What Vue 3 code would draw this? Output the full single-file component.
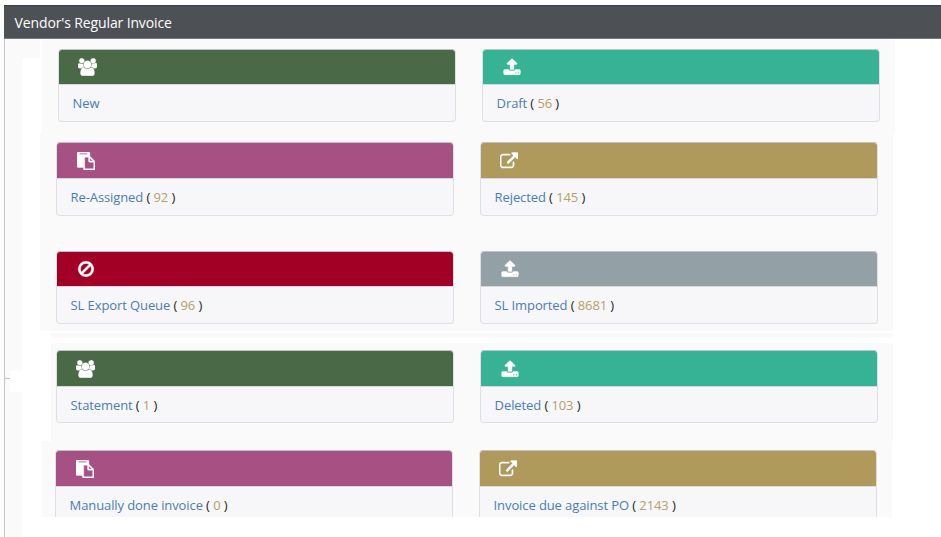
<script setup>
const icons = {
  users: {
    box: '-64 0 1920 1792',
    width: 19,
    d: 'M529 896q-162 5-265 128h-134q-82 0-138-40.5t-56-118.5q0-353 124-353 6 0 43.5 21t97.5 42.5 119 21.5q67 0 133-23-5 37-5 66 0 159 92 293zm1071 637q0 120-73 189.5t-194 69.5h-874q-121 0-194-69.5t-73-189.5q0-53 3.5-103.5t14-109 26.5-108.5 43-97.5 62-81 85.5-53.5 111.5-20q10 0 43 21.5t73 48 107 48 135 21.5 135-21.5 107-48 73-48 43-21.5q61 0 111.5 20t85.5 53.5 62 81 43 97.5 26.5 108.5 14 109 3.5 103.5zm-1024-1277q0 106-75 181t-181 75-181-75-75-181 75-181 181-75 181 75 75 181zm704 384q0 159-112.5 271.5t-271.5 112.5-271.5-112.5-112.5-271.5 112.5-271.5 271.5-112.5 271.5 112.5 112.5 271.5zm576 225q0 78-56 118.5t-138 40.5h-134q-103-123-265-128 92-134 92-293 0-29-5-66 66 23 133 23 59 0 119-21.5t97.5-42.5 43.5-21q124 0 124 353zm-128-609q0 106-75 181t-181 75-181-75-75-181 75-181 181-75 181 75 75 181z',
  },
  upload: {
    box: '0 0 1792 1792',
    width: 18,
    d: 'M1344 1472q0-26-19-45t-45-19-45 19-19 45 19 45 45 19 45-19 19-45zm256 0q0-26-19-45t-45-19-45 19-19 45 19 45 45 19 45-19 19-45zm128-224v320q0 40-28 68t-68 28h-1472q-40 0-68-28t-28-68v-320q0-40 28-68t68-28h427q21 56 70.5 92t110.5 36h256q61 0 110.5-36t70.5-92h427q40 0 68 28t28 68zm-325-648q-17 40-59 40h-256v448q0 26-19 45t-45 19h-256q-26 0-45-19t-19-45v-448h-256q-42 0-59-40-17-39 14-69l448-448q18-19 45-19t45 19l448 448q31 30 14 69z',
  },
  paste: {
    box: '0 0 1792 1792',
    width: 18,
    d: 'M768 1664h896v-640h-416q-40 0-68-28t-28-68v-416h-384v1152zm256-1440v-64q0-13-9.5-22.5t-22.5-9.5h-704q-13 0-22.5 9.5t-9.5 22.5v64q0 13 9.5 22.5t22.5 9.5h704q13 0 22.5-9.5t9.5-22.5zm256 672h299l-299-299v299zm512 128v672q0 40-28 68t-68 28h-960q-40 0-68-28t-28-68v-160h-544q-40 0-68-28t-28-68v-1344q0-40 28-68t68-28h1088q40 0 68 28t28 68v328q21 13 36 28l408 408q28 28 48 76t20 88z',
  },
  external: {
    box: '64 0 1792 1792',
    width: 18,
    d: 'M1472 989v320q0 119-84.5 203.5t-203.5 84.5h-832q-119 0-203.5-84.5t-84.5-203.5v-832q0-119 84.5-203.5t203.5-84.5h704q14 0 23 9t9 23v64q0 14-9 23t-23 9h-704q-66 0-113 47t-47 113v832q0 66 47 113t113 47h832q66 0 113-47t47-113v-320q0-14 9-23t23-9h64q14 0 23 9t9 23zm384-864v512q0 26-19 45t-45 19-45-19l-176-176-652 652q-10 10-23 10t-23-10l-114-114q-10-10-10-23t10-23l652-652-176-176q-19-19-19-45t19-45 45-19h512q26 0 45 19t19 45z',
  },
  ban: {
    box: '0 0 1792 1792',
    width: 18,
    d: 'M1440 893q0-161-87-295l-754 753q137 89 297 89 111 0 211.5-43.5t173.5-116.5 116-174.5 43-212.5zm-999 299l755-754q-135-91-300-91-148 0-273 73t-198 199-73 274q0 162 89 299zm1223-299q0 157-61 300t-163.5 246-245 164-298.5 61-298.5-61-245-164-163.5-246-61-300 61-299.5 163.5-245.5 245-164 298.5-61 298.5 61 245 164 163.5 245.5 61 299.5z',
  },
}

const rows = [
  { key: 'entry', cards: [
    { label: 'New', icon: 'users', tone: 'green' },
    { label: 'Draft', count: 56, icon: 'upload', tone: 'teal' },
  ] },
  { key: 'review', cards: [
    { label: 'Re-Assigned', count: 92, icon: 'paste', tone: 'purple' },
    { label: 'Rejected', count: 145, icon: 'external', tone: 'gold' },
  ] },
  { key: 'transfer', cards: [
    { label: 'SL Export Queue', count: 96, icon: 'ban', tone: 'red' },
    { label: 'SL Imported', count: 8681, icon: 'upload', tone: 'slate' },
  ] },
  { key: 'archive', cards: [
    { label: 'Statement', count: 1, icon: 'users', tone: 'green' },
    { label: 'Deleted', count: 103, icon: 'upload', tone: 'teal' },
  ] },
  { key: 'manual', cards: [
    { label: 'Manually done invoice', count: 0, icon: 'paste', tone: 'purple' },
    { label: 'Invoice due against PO', count: 2143, icon: 'external', tone: 'gold' },
  ] },
]
</script>

<template>
  <div class="page">
    <header class="bar">Vendor's Regular Invoice</header>
    <div class="content">
      <aside class="rail">
        <div class="rail-line"></div>
        <div class="rail-tick"></div>
        <div class="rail-line rail-rest"></div>
      </aside>
      <div class="gutter"></div>
      <main class="board">
        <section v-for="row in rows" :key="row.key" class="row" :class="row.key">
          <article v-for="card in row.cards" :key="card.label" class="card">
            <div class="head" :class="card.tone">
              <svg
                class="icon"
                :class="card.icon"
                :width="icons[card.icon].width"
                height="18"
                :viewBox="icons[card.icon].box"
              >
                <path :d="icons[card.icon].d" />
              </svg>
            </div>
            <div class="body">
              <a class="link">{{ card.label }}</a>
              <template v-if="card.count !== undefined"> ( <span class="count">{{ card.count }}</span> )</template>
            </div>
          </article>
        </section>
      </main>
    </div>
  </div>
</template>

<style>
body {
  background: #fff;
  overflow: hidden;
}
</style>

<style scoped>
.page {
  box-sizing: border-box;
  height: 537px;
  padding: 5px 0 0 4px;
  overflow: hidden;
  display: flex;
  flex-direction: column;
  font-family: 'Open Sans', 'Liberation Sans', sans-serif;
  font-size: 13px;
  letter-spacing: -0.1px;
  color: #222;
}
.bar {
  box-sizing: border-box;
  flex: none;
  height: 34px;
  padding-left: 10.6px;
  border-top: 1px solid #3d3f44;
  border-bottom: 1px solid #77797d;
  background: #4d5055;
  color: #fff;
  font-size: 14px;
  letter-spacing: -0.13px;
  line-height: 33px;
}
.content {
  flex: 1;
  display: flex;
  min-height: 0;
}
.rail {
  flex: none;
  width: 18px;
  display: flex;
  flex-direction: column;
}
.rail-line {
  box-sizing: border-box;
  height: 332px;
  border-left: 1px solid #c4c4c6;
  background: #fafafa;
}
.rail-tick {
  box-sizing: border-box;
  height: 21px;
  border-left: 1px solid #c4c4c6;
  background: linear-gradient(#c4c4c6, #c4c4c6) 0 7px / 5px 1px no-repeat,
    linear-gradient(#fafafa, #fafafa) 0 0 / 5px 21px no-repeat;
}
.rail-rest {
  height: auto;
  flex: 1;
}
.gutter {
  flex: none;
  width: 18px;
  height: 19px;
  background: #fafafa;
}
.board {
  flex: none;
  width: 860px;
  display: flex;
  flex-direction: column;
}
.row {
  box-sizing: border-box;
  flex: none;
  display: flex;
  gap: 26px;
  background: #fafafa;
}
.entry {
  width: 853px;
  height: 95px;
  margin-left: 2px;
  padding: 10px 0 0 16px;
}
.review {
  width: 853px;
  height: 100px;
  padding: 8px 0 0 16px;
}
.transfer {
  width: 853px;
  height: 97px;
  padding: 17px 0 0 16px;
  margin-bottom: 2px;
}
.archive {
  width: 842px;
  height: 108px;
  margin-left: 11px;
  padding: 17px 0 0 5px;
  background: linear-gradient(#fff, #fff) 0 5px / 100% 5px no-repeat, #fafafa;
}
.manual {
  width: 850px;
  height: 76px;
  margin-left: 2px;
  padding: 9px 0 0 13px;
  overflow: hidden;
}
.card {
  box-sizing: border-box;
  flex: none;
  width: 398px;
  height: 73px;
  border: 1px solid #dfe0e6;
  border-top-color: #bfc3c6;
  border-radius: 4px;
  background: #f7f7fa;
  overflow: hidden;
}
.review .card {
  height: 74px;
}
.head {
  box-sizing: border-box;
  height: 35px;
  padding: 8px 0 0 19px;
  border-bottom: 1px solid #d8d9de;
}
.review .head,
.archive .head,
.manual .head {
  height: 36px;
  padding-top: 9px;
}
.icon {
  display: block;
  fill: #fff;
  stroke: #fff;
  stroke-width: 40;
}
.upload {
  margin-left: 1px;
}
.paste,
.ban {
  margin-left: 0.7px;
}
.green { background: #4a6947; }
.teal { background: #35b394; }
.purple { background: #a75084; }
.gold { background: #af9a5c; }
.red { background: #a30026; }
.slate { background: #93a1a7; }
.body {
  padding: 9px 13px 0 13.6px;
  line-height: 18px;
  white-space: nowrap;
}
.link {
  color: #4a7db5;
}
.count {
  color: #b5a067;
}
</style>
